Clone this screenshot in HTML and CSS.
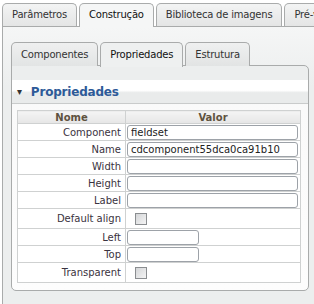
FILE: index.html
```html
<!DOCTYPE html>
<html>
<head>
<meta charset="utf-8">
<link rel="stylesheet" href="styles.css">
</head>
<body>
<div class="tabs outer-tabs">
  <div class="tab">Parâmetros</div>
  <div class="tab active">Construção</div>
  <div class="tab">Biblioteca de imagens</div>
  <div class="tab">Pré-visualização</div>
</div>
<div class="outer-panel">
  <div class="tabs inner-tabs">
    <div class="tab">Componentes</div>
    <div class="tab active">Propriedades</div>
    <div class="tab">Estrutura</div>
  </div>
  <div class="inner-panel">
    <div class="section-head"><span class="caret">&#9662;</span>Propriedades</div>
    <div class="table-wrap">
      <table class="props">
        <thead>
          <tr><th class="c1">Nome</th><th class="c2">Valor</th></tr>
        </thead>
        <tbody>
          <tr><td class="lbl">Component</td><td><input class="txt" type="text" value="fieldset"></td></tr>
          <tr><td class="lbl">Name</td><td><input class="txt" type="text" value="cdcomponent55dca0ca91b10"></td></tr>
          <tr><td class="lbl">Width</td><td><input class="txt" type="text"></td></tr>
          <tr><td class="lbl">Height</td><td><input class="txt" type="text"></td></tr>
          <tr><td class="lbl">Label</td><td><input class="txt" type="text"></td></tr>
          <tr class="chkrow"><td class="lbl">Default align</td><td><span class="chk"></span></td></tr>
          <tr><td class="lbl">Left</td><td><input class="txt short" type="text"></td></tr>
          <tr><td class="lbl">Top</td><td><input class="txt short" type="text"></td></tr>
          <tr class="chkrow"><td class="lbl">Transparent</td><td><span class="chk"></span></td></tr>
        </tbody>
      </table>
    </div>
  </div>
</div>
</body>
</html>
```
FILE: styles.css
```css
html, body {
  margin: 0;
  padding: 0;
  background: #ffffff;
  overflow: hidden;
}
body {
  width: 314px;
  height: 304px;
  font-family: "DejaVu Sans", Verdana, sans-serif;
  font-size: 10px;
  color: #333;
}
.tabs {
  display: flex;
  gap: 2px;
  white-space: nowrap;
  position: relative;
  z-index: 1;
}
.outer-tabs {
  padding: 3px 0 0 2px;
  height: 23px;
}
.tab {
  border: 1px solid #a9abab;
  border-bottom: none;
  border-radius: 5px 5px 0 0;
  background: linear-gradient(#f3f4f4, #e4e5e5);
  padding: 0 9px 0 9px;
  line-height: 22px;
  letter-spacing: -0.2px;
  color: #333;
  flex: none;
}
.tab.active {
  background: #f5f6f6;
  color: #111;
  height: 23px;
}
.outer-panel {
  margin-left: 2px;
  width: 340px;
  height: 290px;
  border: 1px solid #a9abab;
  background: linear-gradient(#f5f6f6, #eceeee 60px, #eceeee);
  padding: 15px 0 0 8px;
  box-sizing: border-box;
}
.inner-tabs {
  height: 24px;
}
.inner-tabs .tab {
  line-height: 23px;
  padding: 0 9px;
  background: linear-gradient(#eff0f0, #e2e4e4);
}
.inner-tabs .tab.active {
  background: #eef0f0;
  height: 24px;
}
.inner-panel {
  width: 298px;
  height: 226px;
  box-sizing: border-box;
  border: 1px solid #a9abab;
  border-radius: 0 5px 5px 5px;
  margin-top: -1px;
  padding-top: 14px;
  background: linear-gradient(#eceeee, #eceeee 14px, #fafafa 40px, #fdfdfd);
}
.section-head {
  height: 24px;
  box-sizing: border-box;
  border-bottom: 1px solid #c9cbcb;
  background: linear-gradient(#ffffff, #ffffff 45%, #e9ebeb 55%, #e9ebeb);
  font-size: 12px;
  font-weight: bold;
  letter-spacing: -0.2px;
  color: #2d5a98;
  padding-left: 5px;
  display: flex;
  align-items: center;
}
.caret {
  color: #333;
  font-size: 10px;
  margin-right: 9px;
}
.table-wrap {
  padding: 6px 0 0 5px;
}
.props {
  border-collapse: collapse;
  width: 284px;
  table-layout: fixed;
  background: #ffffff;
}
.props th, .props td {
  border: 1px solid #cfd1d1;
  padding: 0;
}
.props th {
  background: linear-gradient(#f4f4f4, #e6e6e6);
  color: #5e523f;
  font-weight: bold;
  font-size: 10px;
  height: 12px;
  line-height: 11px;
}
.props .c1 { width: 107px; }
.props td {
  height: 16px;
}
.props tr.chkrow td {
  height: 19px;
}
.lbl {
  text-align: right;
  padding-right: 4px !important;
  color: #3a3340;
}
.txt {
  display: block;
  box-sizing: border-box;
  width: 171px;
  height: 15px;
  margin: 0 0 0 1px;
  border: 1px solid #9da2a8;
  border-radius: 3px;
  padding: 0 3px;
  font-family: "DejaVu Sans", Verdana, sans-serif;
  font-size: 10px;
  color: #222;
  background: #fff;
  outline: none;
}
.txt.short {
  width: 72px;
}
.chk {
  display: block;
  width: 12px;
  height: 12px;
  box-sizing: border-box;
  margin-left: 9px;
  border: 1px solid #8a8d90;
  background: linear-gradient(135deg, #d4d6d8, #f4f4f4);
}
```
